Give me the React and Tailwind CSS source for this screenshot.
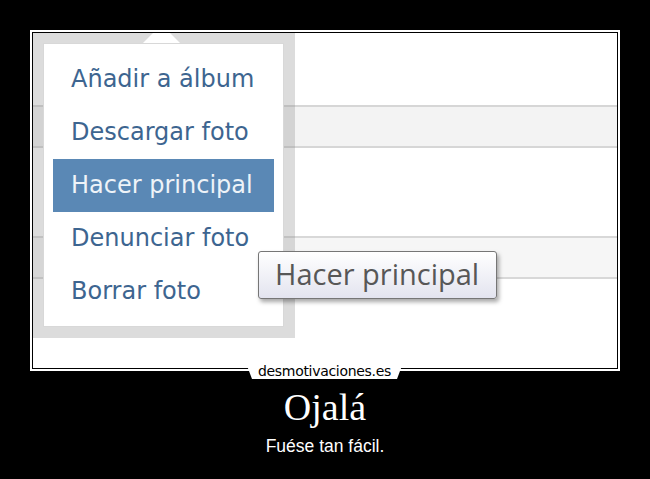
export default function App() {
  const items = [
    "Añadir a álbum",
    "Descargar foto",
    "Hacer principal",
    "Denunciar foto",
    "Borrar foto",
  ];
  return (
    <div className="w-[650px] h-[479px] bg-black overflow-hidden">
      <div className="relative ml-[30px] mt-[30px] w-[590px] h-[341px] border-2 border-white p-px">
        <div className="relative w-full h-full bg-white overflow-hidden">
          <div className="h-[72px]" />
          <div className="h-[43px] border-y-2 border-[#d6d6d6] bg-[#f3f3f3]" />
          <div className="h-[88px]" />
          <div className="h-[43px] border-y-2 border-[#d8d8d8] bg-[#f6f6f6]" />

          {/* dropdown menu */}
          <div className="absolute left-0 top-0 w-[262px] h-[305px] bg-[rgba(140,140,140,0.3)] pl-[10px] pr-[11px] pt-[10px] pb-[11px]">
            <div className="absolute left-[110px] top-0 w-[37px] h-[10px] bg-white [clip-path:polygon(10px_0,27px_0,37px_10px,0_10px)]" />
            <div className="w-full h-full bg-white border border-[#d8d8d8] pt-[9px] font-['DejaVu_Sans',sans-serif] text-[24px]">
              {items.map((t, i) =>
                i === 2 ? (
                  <div
                    key={t}
                    className="mx-[9px] h-[53px] leading-[53px] pl-[18px] bg-[#5a88b5] text-[#eef3f8]"
                  >
                    {t}
                  </div>
                ) : (
                  <div
                    key={t}
                    className="h-[53px] leading-[53px] pl-[27px] text-[#3d6590]"
                  >
                    {t}
                  </div>
                )
              )}
            </div>
          </div>

          {/* tooltip */}
          <div className="absolute left-[225px] top-[218px] w-[239px] h-[48px] rounded-[3px] border border-[#767676] bg-gradient-to-b from-white to-[#e3e4ef] shadow-[2px_3px_4px_rgba(0,0,0,0.35)] pl-[16px] font-['Open_Sans',sans-serif] text-[29px] leading-[44px] text-[#575757]">
            Hacer principal
          </div>
        </div>

        {/* logo badge */}
        <div className="absolute left-[214px] top-[331px] w-[157px] h-[16px] bg-white [clip-path:polygon(0_0,157px_0,151px_16px,6px_16px)] flex items-center justify-center">
          <span className="font-['DejaVu_Sans',sans-serif] text-[14px] leading-[14px] text-black tracking-[-0.3px]">
            desmotivaciones.es
          </span>
        </div>
      </div>

      <div className="mt-[17px] h-[38px] text-center font-['Liberation_Serif',serif] text-[38px] leading-[38px] text-white">
        Ojalá
      </div>
      <div className="mt-[12px] text-center font-['Liberation_Sans',sans-serif] text-[17.5px] leading-[17px] text-white">
        Fuése tan fácil.
      </div>
    </div>
  );
}
